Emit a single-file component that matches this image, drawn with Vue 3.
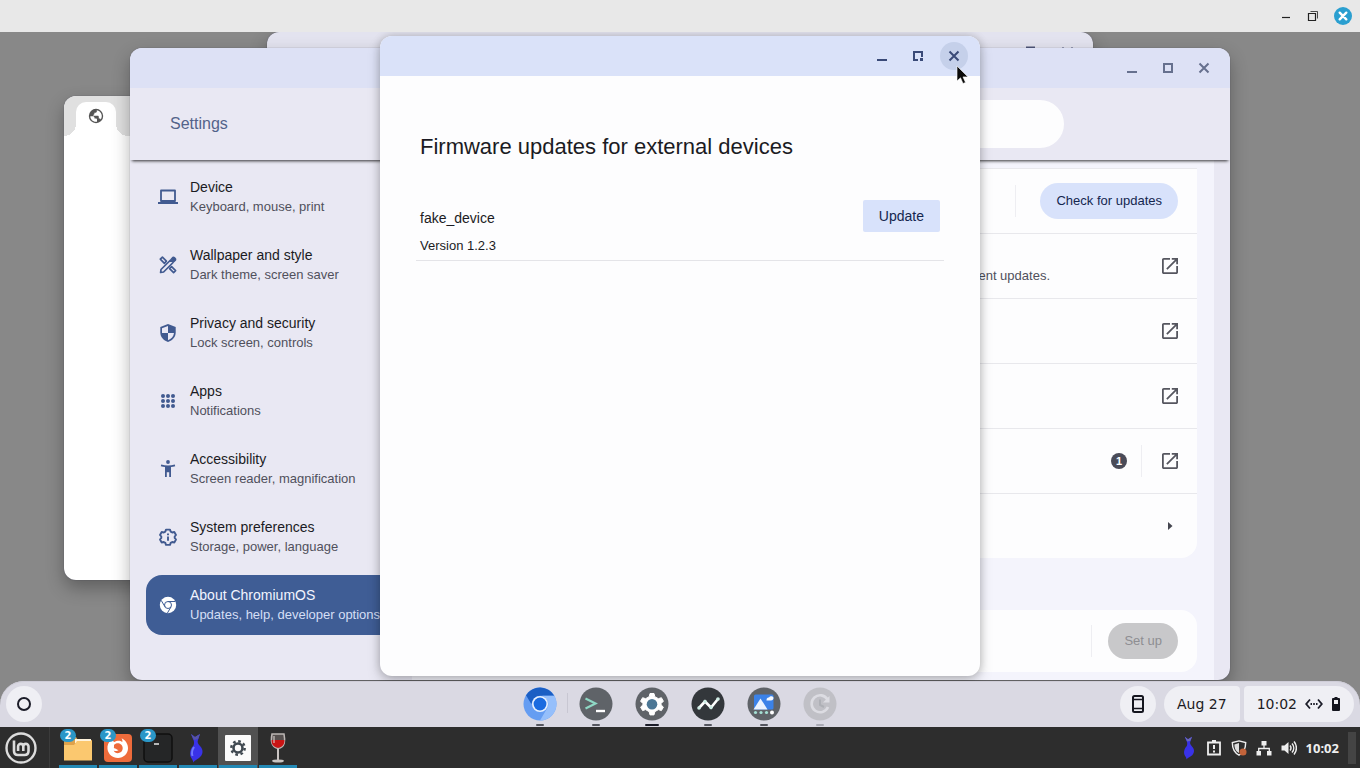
<script setup>
import { ref } from 'vue';

const activeItem = ref('About ChromiumOS');

const menu = [
  { icon: 'laptop', title: 'Device', sub: 'Keyboard, mouse, print' },
  { icon: 'style', title: 'Wallpaper and style', sub: 'Dark theme, screen saver' },
  { icon: 'shield', title: 'Privacy and security', sub: 'Lock screen, controls' },
  { icon: 'apps', title: 'Apps', sub: 'Notifications' },
  { icon: 'access', title: 'Accessibility', sub: 'Screen reader, magnification' },
  { icon: 'system', title: 'System preferences', sub: 'Storage, power, language' },
  { icon: 'chrome', title: 'About ChromiumOS', sub: 'Updates, help, developer options' }
];

const shelfApps = [
  { icon: 'chromium', label: 'Chromium' },
  { icon: 'terminal', label: 'Terminal' },
  { icon: 'settings', label: 'Settings', active: true },
  { icon: 'diagnostics', label: 'Diagnostics' },
  { icon: 'gallery', label: 'Gallery' },
  { icon: 'update', label: 'Firmware updates', dim: true }
];

const hostApps = [
  { icon: 'files', label: 'Files', count: 2 },
  { icon: 'firefox', label: 'Browser', count: 2 },
  { icon: 'console', label: 'Console', count: 2 },
  { icon: 'fish', label: 'Emulator' },
  { icon: 'gear', label: 'System settings', active: true },
  { icon: 'wine', label: 'Wine' }
];
</script>

<template>
  <div class="screen">
    <header class="host-title">
      <button class="host-btn" aria-label="Minimize">
        <svg width="12" height="12" viewBox="0 0 12 12"><path d="M2 7.500h8" stroke="#222" stroke-width="1.200" /></svg>
      </button>
      <button class="host-btn" aria-label="Restore">
        <svg width="12" height="12" viewBox="0 0 12 12" fill="none" stroke="#222">
          <path d="M1.500 3.500h7v7h-7z" stroke-width="1.200" />
          <path d="M3.500 1.500h7v7" stroke-width=".8" />
        </svg>
      </button>
      <button class="host-btn" aria-label="Close">
        <svg width="18" height="18" viewBox="0 0 18 18">
          <circle cx="9" cy="9" r="9" fill="#2a9fd0" />
          <path d="M5.700 5.700l6.600 6.600M12.300 5.700l-6.600 6.600" stroke="#fff" stroke-width="2.400" stroke-linecap="round" />
        </svg>
      </button>
    </header>

    <main class="desktop">
      <!-- Browser window -->
      <section class="window browser">
        <div class="tab-strip">
          <div class="tab">
            <svg width="16" height="16" viewBox="0 0 16 16">
              <circle cx="8" cy="8" r="7.200" fill="#555" />
              <path d="M2.300 8.300h2.500c1 0 1.700.6 1.700 1.500v.8h1.600c.6 0 .9.400.9.900v2.200c-3.600.6-6.600-1.900-6.700-5.400z" fill="#fff" />
              <path d="M8.800 2.300v1.300c0 .7-.5 1.100-1.200 1.100H6.400v1.100c0 .6-.4.900-1 .9v1h4.200c.8 0 1.200.5 1.200 1.200v1.600h.8c.6 0 1 .4 1.200.9 2.300-3.100.6-8.300-4-9.100z" fill="#fff" />
            </svg>
          </div>
        </div>
      </section>

      <section class="window backdrop">
        <svg class="backdrop-controls" width="60" height="16" viewBox="0 0 60 16" fill="none" stroke="#50587a" stroke-width="2">
          <path d="M7 15.500h9" />
          <path d="M43 15.500h2M52 15.500h2" stroke-width="1" opacity=".5" />
        </svg>
      </section>

      <!-- Settings window -->
      <section class="window settings">
        <div class="titlebar">
          <button class="win-btn" aria-label="Minimize settings">
            <svg width="12" height="12" viewBox="0 0 12 12"><path d="M1 10h10" stroke="#66708e" stroke-width="2" /></svg>
          </button>
          <button class="win-btn" aria-label="Maximize settings">
            <svg width="12" height="12" viewBox="0 0 12 12" fill="none"><path d="M2 2h8v8H2z" stroke="#66708e" stroke-width="2" /></svg>
          </button>
          <button class="win-btn" aria-label="Close settings">
            <svg width="12" height="12" viewBox="0 0 12 12"><path d="M1.500 1.500l9 9M10.500 1.500l-9 9" stroke="#66708e" stroke-width="2" /></svg>
          </button>
        </div>

        <div class="settings-head">
          <h2>Settings</h2>
          <input class="search" type="search" aria-label="Search settings">
        </div>

        <div class="settings-body">
          <nav class="menu">
            <a v-for="item in menu" :key="item.title" href="#" class="menu-item"
              :class="{ selected: item.title === activeItem }" @click.prevent="activeItem = item.title">
              <svg class="menu-icon" width="20" height="20" viewBox="0 0 20 20">
                <g v-if="item.icon === 'laptop'" fill="none" stroke="currentColor">
                  <path d="M3 3.500h14v10.500H3z" stroke-width="1.800" stroke-linejoin="round" />
                  <path d="M0 16h20" stroke-width="2" />
                </g>
                <g v-else-if="item.icon === 'style'" fill="none" stroke="currentColor" stroke-width="1.700" stroke-linejoin="round">
                  <path d="M2.300 4.200l2.100-2 4 4-2 2.100z" />
                  <path d="M11.600 13.600l2-2 4 4-2 2z" />
                  <path d="M2.600 17.500l.4-3L12.600 5l2.500 2.500-9.500 9.500z" />
                  <path d="M13.500 4l1.600-1.600c.6-.6 3 1.800 2.400 2.400L15.900 6.500z" fill="currentColor" />
                </g>
                <g v-else-if="item.icon === 'shield'">
                  <path d="M10 1l7.700 2.900v5.600c0 4.400-3.100 8.100-7.700 9.500-4.600-1.400-7.700-5.100-7.700-9.500V3.900z" fill="currentColor" />
                  <path d="M10 3v7H4V5.200zM10 10h6c-.4 3.400-2.700 6-6 7.200z" fill="#e9e8f5" />
                </g>
                <g v-else-if="item.icon === 'apps'" fill="currentColor">
                  <template v-for="y in 3" :key="y">
                    <circle v-for="x in 3" :key="x" :cx="x * 5" :cy="y * 5" r="2" />
                  </template>
                </g>
                <g v-else-if="item.icon === 'access'" fill="currentColor">
                  <circle cx="10" cy="3" r="1.900" />
                  <path d="M3.200 5.500c4.500 1.200 9.100 1.200 13.600 0l.4 1.800c-1.500.4-2.800.7-4.200.8v10H11.200v-4.800H8.800v4.800H7v-10c-1.400-.1-2.700-.4-4.200-.8z" />
                </g>
                <g v-else-if="item.icon === 'system'" fill="none" stroke="currentColor" stroke-width="1.900">
                  <path d="M8 2.600h4l.7 2 1.500.9 2.100-.5 1.700 3-1.300 1.500v1.400L18 12.500l-1.700 3-2.100-.5-1.500.9-.7 2H8l-.7-2-1.500-.9-2.100.5-1.700-3 1.300-1.600V9.500L2 8l1.700-3 2.100.5 1.500-.9z" stroke-linejoin="round" />
                  <path d="M10 6.500v1.700M10 9.500v4.200" />
                </g>
                <g v-else fill="none">
                  <circle cx="10" cy="10" r="8.200" fill="#fff" />
                  <g stroke="#3f5d95" stroke-width="1">
                    <circle cx="10" cy="10" r="3.500" />
                    <path d="M10 6.500h7.400M7 11.800L3.200 5.400M13 11.800l-3.600 6.300" />
                  </g>
                </g>
              </svg>
              <span class="menu-text">
                <span class="menu-title">{{ item.title }}</span>
                <span class="menu-sub">{{ item.sub }}</span>
              </span>
            </a>
          </nav>

          <div class="content">
            <div class="card">
              <div class="row">
                <i class="divider check-divider"></i>
                <button class="pill">Check for updates</button>
              </div>
              <div v-for="n in 4" :key="n" class="row">
                <span v-if="n === 1" class="row-note">ent updates.</span>
                <template v-if="n === 4">
                  <span class="count">1</span>
                  <i class="divider"></i>
                </template>
                <a href="#" class="open-link" aria-label="Open in new window" @click.prevent>
                  <svg width="16" height="16" viewBox="3 3 18 18" fill="#55565f">
                    <path d="M19 19H5V5h7V3H5c-1.110 0-2 .9-2 2v14c0 1.100.89 2 2 2h14c1.100 0 2-.9 2-2v-7h-2v7zM14 3v2h3.590l-9.830 9.830 1.410 1.410L19 6.410V10h2V3h-7z" />
                  </svg>
                </a>
              </div>
              <div class="row">
                <a href="#" class="open-link" aria-label="More" @click.prevent>
                  <svg width="16" height="16" viewBox="0 0 16 16"><path d="M6 4l4.500 4L6 12z" fill="#44454f" /></svg>
                </a>
              </div>
            </div>
            <div class="card last-card">
              <div class="row">
                <i class="divider"></i>
                <button class="pill" disabled>Set up</button>
              </div>
            </div>
          </div>
          <div class="gutter"></div>
        </div>
      </section>

      <!-- Firmware updates window -->
      <section class="window firmware">
        <div class="titlebar">
          <button class="win-btn" aria-label="Minimize">
            <svg width="12" height="12" viewBox="0 0 12 12"><path d="M1 10h10" stroke="#3a4a78" stroke-width="2" /></svg>
          </button>
          <button class="win-btn" aria-label="Maximize">
            <svg width="12" height="12" viewBox="0 0 12 12" fill="none"><path d="M6 10H2V2h8v5" stroke="#3a4a78" stroke-width="2" /><path d="M8 8h3v3H8z" fill="#3a4a78" /></svg>
          </button>
          <button class="win-btn hovered" aria-label="Close">
            <svg width="12" height="12" viewBox="0 0 12 12"><path d="M1.500 1.500l9 9M10.500 1.500l-9 9" stroke="#3a4a78" stroke-width="2" /></svg>
          </button>
        </div>
        <div class="firmware-body">
          <h1>Firmware updates for external devices</h1>
          <div class="device">
            <div class="device-info">
              <span class="device-name">fake_device</span>
              <span class="device-version">Version 1.2.3</span>
            </div>
            <button class="update-btn">Update</button>
          </div>
        </div>
      </section>

      <svg class="cursor" width="14" height="20" viewBox="0 0 14 20">
        <path d="M1 1v15l3.500-3.200 2.500 5.700 2.500-1.100L7 11.900h5z" fill="#0a0a0a" stroke="#fff" stroke-width=".6" />
      </svg>

      <!-- Shelf -->
      <footer class="shelf">
        <div class="shelf-start">
          <button class="round" aria-label="Launcher">
            <svg width="16" height="16" viewBox="0 0 16 16"><circle cx="8" cy="8" r="6" fill="none" stroke="#1b1c28" stroke-width="2" /></svg>
          </button>
        </div>
        <div class="shelf-apps">
          <button v-for="app in shelfApps" :key="app.icon" class="shelf-app" :class="{ active: app.active, dim: app.dim }"
            :aria-label="app.label">
            <svg width="34" height="34" viewBox="0 0 34 34">
              <g v-if="app.icon === 'chromium'">
                <circle cx="17" cy="17" r="16.500" fill="#659df2" />
                <path d="M3 8.200A16.500 16.500 0 0 1 31.300 8.800H17a8.200 8.200 0 0 0-7.500 5.500L8.300 17z" fill="#1b5fc4" />
                <path d="M31.300 8.800A16.500 16.500 0 0 1 17 33.500l7.300-12.400c2.500-4.300 0-10-5-12.300z" fill="#95bffb" />
                <circle cx="17" cy="17" r="8" fill="#e8f1fe" />
                <circle cx="17" cy="17" r="6.400" fill="#1a6be0" />
              </g>
              <g v-else-if="app.icon === 'terminal'">
                <circle cx="17" cy="17" r="16.500" fill="#5f6368" />
                <path d="M6.500 11.500l10 5-10 5" fill="none" stroke="#8ed8c4" stroke-width="2.200" />
                <path d="M17 24h9" stroke="#fff" stroke-width="2.400" />
              </g>
              <g v-else-if="app.icon === 'settings'">
                <circle cx="17" cy="17" r="16.500" fill="#5f6368" />
                <path d="M15 6.500h4l.8 3.200 3.600 2 3-1 2 3.500-2.300 2.300v1.400l2.300 2.200-2 3.500-3-1-3.600 2.100-.8 3.200h-4l-.8-3.200-3.600-2.100-3 1-2-3.500 2.300-2.200v-1.400l-2.300-2.300 2-3.500 3 1 3.600-2z" fill="#fff" stroke="#fff" stroke-linejoin="round" />
                <circle cx="17" cy="17.200" r="5.300" fill="#4c7795" />
              </g>
              <g v-else-if="app.icon === 'diagnostics'">
                <circle cx="17" cy="17" r="16.500" fill="#33373b" />
                <path d="M8 21l6-6.500 6 6L27 12" fill="none" stroke="#fff" stroke-width="2.600" />
                <g fill="#cfeee6"><circle cx="8" cy="21" r="1.800" /><circle cx="14" cy="14.500" r="1.800" /><circle cx="20" cy="20.500" r="1.800" /><circle cx="27" cy="12" r="1.800" /></g>
              </g>
              <g v-else-if="app.icon === 'gallery'">
                <circle cx="17" cy="17" r="16.500" fill="#5f6368" />
                <rect x="7" y="7.500" width="19.500" height="15" rx="1.500" fill="#3b82e8" />
                <path d="M6.500 22.500l7-11 7 11z" fill="#eaf3ff" />
                <path d="M19.500 13c0-2 1.500-2.500 2.500-2.500 1-2 4.500-1.500 4.500.5 0 1.500-1 2.500-2.500 2.500h-4.500z" fill="#f3f8ff" />
                <g fill="#a5e0d4"><circle cx="8.500" cy="25.500" r="1.600" /><circle cx="14" cy="25.500" r="1.600" /><circle cx="19.500" cy="25.500" r="1.600" /></g>
                <circle cx="25" cy="25.500" r="2" fill="#fff" />
              </g>
              <g v-else fill="none">
                <circle cx="17" cy="17" r="16.500" fill="#c0c0c6" />
                <path d="M24.500 12.500A8.500 8.500 0 1 0 25 20" stroke="#dcdce2" stroke-width="2.600" />
                <path d="M26.500 9v6.500H20z" fill="#dcdce2" />
                <path d="M17 12.500V18l4 2" stroke="#aeb0b6" stroke-width="2" />
              </g>
            </svg>
          </button>
        </div>
        <div class="shelf-end">
          <button class="round" aria-label="Phone hub">
            <svg width="20" height="20" viewBox="0 0 20 20" fill="none" stroke="#15161f" stroke-width="2">
              <rect x="5" y="2" width="10" height="16" rx="1.500" />
              <path d="M5 5.500h10M5 14.500h10" stroke-width="1.500" />
            </svg>
          </button>
          <button class="tray date">Aug 27</button>
          <button class="tray status">
            <span>10:02</span>
            <svg width="18" height="14" viewBox="0 0 18 14" fill="none" stroke="#1b1c28" stroke-width="1.800">
              <path d="M5 2.500L1.200 7 5 11.500M13 2.500L16.800 7 13 11.500" />
              <path d="M5.500 7h1.500M8.200 7h1.600M11 7h1.500" />
            </svg>
            <svg width="10" height="14" viewBox="0 0 10 14">
              <path d="M3.500 0h3v1H8q1 0 1 1v11q0 1-1 1H2q-1 0-1-1V2q0-1 1-1h1.500z" fill="#15161f" />
              <path d="M3 3h4v4H3z" fill="#f0f0f4" />
            </svg>
          </button>
        </div>
      </footer>
    </main>

    <footer class="taskbar">
      <button class="mint" aria-label="Menu">
        <svg width="32" height="32" viewBox="0 0 32 32" fill="none" stroke="#dcdcdc">
          <circle cx="16" cy="16" r="14.500" stroke-width="2.400" />
          <path d="M9 8.500V19c0 2.500 1.500 4 4 4h6.500c2.500 0 4-1.500 4-4v-4.500a2.600 2.600 0 0 0-5.200 0V19M18.300 14.500a2.600 2.600 0 0 0-5.200 0V19" stroke-width="2.600" />
        </svg>
      </button>
      <i class="task-sep"></i>
      <div class="tasks">
        <button v-for="app in hostApps" :key="app.icon" class="task" :class="{ active: app.active }" :aria-label="app.label">
          <svg width="30" height="30" viewBox="0 0 30 30">
            <g v-if="app.icon === 'files'">
              <path d="M1 4h12l2 3h14v20H1z" fill="#dfa24b" />
              <path d="M12 6h16v4H12z" fill="#fff3dc" />
              <path d="M1 12h10l3-4h15v19.500H1z" fill="#fbc86f" />
            </g>
            <g v-else-if="app.icon === 'firefox'">
              <rect x="1" y="1" width="28" height="28" rx="4" fill="#ee6b3b" />
              <path d="M9 6c-3.500 3-5 6-4.500 10 .7 5.200 5 9 10.500 9s10-4.200 10-9.700c0-4.500-2.500-8-6.500-10 1 1.500 1 2.500.8 3.700C17 7 13.500 7.500 11.500 9 10 8.300 9.300 7.200 9 6z" fill="#fff" />
              <path d="M11 12c1.500-2 5-2.500 7-.5 2.300 2 2.300 5.600 0 7.500-2.500 2-6.300 1.300-7.300-1.500 1.500 1 3.800.7 4.800-.5-1.800 0-2-1.200-3.500-1.500-.8-.2-1.500-.8-1-1.500z" fill="#ee6b3b" />
            </g>
            <g v-else-if="app.icon === 'console'">
              <rect x="1" y="1" width="28" height="28" rx="4" fill="#252627" stroke="#0f0f0f" stroke-width="1.500" />
              <path d="M11 11h5" stroke="#e8e8e8" stroke-width="1.500" />
            </g>
            <g v-else-if="app.icon === 'fish'">
              <path d="M8 1l4 3 5-3-2 6c-1 2 0 4 2 6 4 4 3 9-1 12-2 1.500-4 2-6 4.500.5-2-1-3-2-5-2-4-.5-9 2.500-12 1-2.500.5-5-.5-6.500z" fill="#3932e8" />
              <path d="M8 1l4 3 5-3-2 5-4 1z" fill="#5654a8" />
              <path d="M11 14c-2 3-2.500 6-1.500 9" fill="none" stroke="#6f78ff" stroke-width="2" />
            </g>
            <g v-else-if="app.icon === 'gear'">
              <rect x="2" y="2" width="26" height="26" rx="1" fill="#fbfbfb" />
              <circle cx="15" cy="15" r="4.500" fill="none" stroke="#3f4850" stroke-width="2.600" />
              <circle cx="15" cy="15" r="6.700" fill="none" stroke="#3f4850" stroke-width="2.400" stroke-dasharray="2.630 2.630" />
            </g>
            <g v-else>
              <path d="M9 1h12c1.200 6 1.500 13-6 14.500C7.500 14 7.800 7 9 1z" fill="#56504f" stroke="#bcb6b4" stroke-width="1.500" />
              <path d="M8.600 7h12.800c.2 4-1.400 7-6.400 7.800C10 14 8.400 11 8.600 7z" fill="#c91414" />
              <path d="M15 15.500V27" stroke="#c9c4c2" stroke-width="2" />
              <ellipse cx="15" cy="28" rx="6" ry="1.600" fill="#c9c4c2" />
              <path d="M11 3v7" stroke="#e5dedc" />
            </g>
          </svg>
          <span v-if="app.count" class="task-count">{{ app.count }}</span>
        </button>
      </div>
      <div class="host-tray">
        <svg width="18" height="24" viewBox="4 0 20 30">
          <path d="M10 1l4 3 5-3-2 6c-1 2 0 4 2 6 4 4 3 9-1 12-2 1.500-4 2-6 4.500.5-2-1-3-2-5-2-4-.5-9 2.500-12 1-2.500.5-5-.5-6.500z" fill="#3932e8" />
          <path d="M10 1l4 3 5-3-2 5-4 1z" fill="#6a68b8" />
        </svg>
        <svg width="16" height="16" viewBox="0 0 16 16" fill="none" stroke="#eee" stroke-width="1.800">
          <path d="M2 2.500h12v12H2z" />
          <path d="M8 5v4M8 10.500v2" stroke-width="2" />
          <path d="M6 1.200h4" stroke-width="2.400" />
        </svg>
        <svg width="16" height="16" viewBox="0 0 18 18">
          <path d="M9 1l7.500 2c0 6.500-2 11-7.500 14-5.500-3-7.500-7.500-7.500-14z" fill="#2d2d2d" stroke="#eee" stroke-width="1.600" />
          <path d="M9 3.500v11C5 12.500 4 9.500 3.800 5z" fill="#ddd" />
          <circle cx="13.500" cy="13.500" r="4" fill="#c2633a" />
        </svg>
        <svg width="16" height="16" viewBox="0 0 16 16" fill="#eee">
          <path d="M5.500 1h5v4.500h-5zM.5 11h4.500v4.500H.5zM11 11h4.500v4.500H11z" />
          <path d="M8 5v3.500M2.700 11.500v-3h10.600v3" fill="none" stroke="#eee" stroke-width="1.300" />
        </svg>
        <svg width="16" height="16" viewBox="0 0 16 16" fill="none" stroke="#eee" stroke-width="1.500">
          <path d="M.5 5.500h3L7.500 2v12l-4-3.500h-3z" fill="#eee" stroke="none" />
          <path d="M9 5.500c1.200 1.500 1.200 3.500 0 5M11 3.500c2.300 2.600 2.300 6.400 0 9M13 1.500c3.200 3.700 3.200 9.300 0 13" />
        </svg>
        <span class="host-clock">10:02</span>
        <i class="show-desktop"></i>
      </div>
    </footer>
  </div>
</template>

<style>
body {
  margin: 0;
  background: #2d2d2d;
}
</style>

<style scoped>
.screen {
  display: flex;
  flex-direction: column;
  min-height: 100vh;
  font-family: 'Liberation Sans', Arial, sans-serif;
  color: #1b1b23;
}

.screen *,
.screen {
  box-sizing: border-box;
}

button {
  border: 0;
  padding: 0;
  background: none;
  font-family: inherit;
  color: inherit;
}

svg {
  display: block;
  flex: none;
}

.host-title {
  display: flex;
  align-items: center;
  justify-content: flex-end;
  gap: 15px;
  height: 32px;
  padding-right: 8px;
  background: #e8e8e8;
}

.desktop {
  position: relative;
  flex: 1;
  display: flex;
  flex-direction: column;
  justify-content: flex-end;
  background: #888;
  overflow: hidden;
}

/* Windows */
.window {
  position: absolute;
  isolation: isolate;
  border-radius: 12px;
  overflow: hidden;
  box-shadow: 0 0 1px rgba(30, 30, 60, 0.6), 0 8px 18px rgba(0, 0, 0, 0.3);
}

.browser {
  left: 64px;
  top: 64px;
  width: 600px;
  height: 484px;
  background: #fff;
}

.tab-strip {
  display: flex;
  align-items: flex-end;
  height: 40px;
  padding-left: 12px;
  background: #e0e0e0;
}

.tab {
  position: relative;
  display: flex;
  justify-content: center;
  width: 40px;
  height: 34px;
  padding-top: 6px;
  border-radius: 10px 10px 0 0;
  background: #fff;
}

.tab::before,
.tab::after {
  content: '';
  position: absolute;
  bottom: 0;
  width: 12px;
  height: 12px;
}

.tab::before {
  right: 100%;
  background: radial-gradient(circle at 0 0, transparent 12px, #fff 12px);
}

.tab::after {
  left: 100%;
  background: radial-gradient(circle at 100% 0, transparent 12px, #fff 12px);
}

.backdrop {
  left: 267px;
  top: 0;
  width: 826px;
  height: 600px;
  background: #e3e3ef;
}

.backdrop-controls {
  margin-left: 752px;
}

.settings {
  left: 130px;
  top: 16px;
  display: flex;
  flex-direction: column;
  width: 1100px;
  height: 632px;
  background: #e9e8f3;
}

.titlebar {
  display: flex;
  align-items: center;
  justify-content: flex-end;
  gap: 8px;
  flex: none;
  height: 40px;
  padding-right: 12px;
  background: #dde1f5;
}

.win-btn {
  display: flex;
  align-items: center;
  justify-content: center;
  width: 28px;
  height: 28px;
  border-radius: 50%;
}

.win-btn.hovered {
  background: #c5d0ea;
}

.settings-head {
  position: relative;
  display: flex;
  align-items: center;
  flex: none;
  height: 72px;
  padding: 0 40px;
  background: #e9e8f3;
  box-shadow: 0 3px 3px -2px rgba(0, 0, 0, 0.8);
  z-index: 1;
}

.settings-head h2 {
  flex: none;
  width: 214px;
  margin: 0;
  font-size: 16px;
  font-weight: 400;
  line-height: 24px;
  color: #53638a;
}

.search {
  width: 680px;
  height: 48px;
  border: 0;
  border-radius: 24px;
  background: #fdfdfe;
}

.settings-body {
  display: flex;
  flex: 1;
  min-height: 0;
}

.menu {
  display: flex;
  flex-direction: column;
  flex: none;
  gap: 8px;
  width: 282px;
  padding: 7px 0 0 16px;
}

.menu-item {
  display: flex;
  align-items: center;
  flex: none;
  gap: 12px;
  height: 60px;
  padding-left: 12px;
  border-radius: 16px;
  color: #415a90;
  text-decoration: none;
  white-space: nowrap;
}

.menu-text {
  display: flex;
  flex-direction: column;
}

.menu-title {
  font-size: 14px;
  line-height: 20px;
  color: #1b1b23;
}

.menu-sub {
  font-size: 13px;
  line-height: 20px;
  color: #50505c;
}

.selected {
  background: #3f5d95;
}

.selected .menu-title {
  color: #f2f5ff;
}

.selected .menu-sub {
  color: #d5dff5;
}

.content {
  flex: 1;
  min-width: 0;
  padding: 8px 17px 0 40px;
  background: #f4f4fc;
}

.gutter {
  width: 16px;
}

.card {
  background: #fdfdfe;
  border-radius: 0 0 16px 16px;
}

.last-card {
  margin-top: 52px;
  border-radius: 16px;
}

.row {
  display: flex;
  align-items: center;
  justify-content: flex-end;
  height: 65px;
  padding-right: 19px;
  border-top: 1px solid #e8e8ec;
}

.last-card .row {
  height: 62px;
  border-top: 0;
}

.row-note {
  margin: 20px 112px 0 0;
  font-size: 13px;
  line-height: 20px;
  color: #50505c;
}

.count {
  width: 16px;
  height: 16px;
  border-radius: 50%;
  background: #4a4b58;
  color: #fff;
  font-size: 11px;
  font-weight: 700;
  line-height: 16px;
  text-align: center;
}

.divider {
  width: 1px;
  height: 32px;
  margin: 0 16px;
  background: #eeeef2;
}

.count + .divider {
  margin: 0 20px 0 14px;
}

.check-divider {
  margin-right: 24px;
}

.pill {
  height: 36px;
  padding: 0 16px 2px;
  border-radius: 18px;
  background: #d8e2fb;
  font-size: 13px;
  color: #14264f;
}

.pill:disabled {
  background: #c8c8ca;
  color: #8e8e92;
}

.firmware {
  left: 380px;
  top: 4px;
  width: 600px;
  height: 640px;
  background: #fdfdfe;
  box-shadow: 0 0 8px rgba(0, 0, 0, 0.2), 0 6px 14px rgba(0, 0, 0, 0.18);
}

.firmware .titlebar {
  background: #dae2f9;
}

.firmware-body {
  padding: 56px 36px 0;
}

.firmware-body h1 {
  margin: 0 4px 34px;
  font-size: 22px;
  font-weight: 400;
  line-height: 30px;
}

.device {
  display: flex;
  align-items: flex-start;
  justify-content: space-between;
  padding: 4px;
  border-bottom: 1px solid #e4e4e8;
}

.device-info {
  display: flex;
  flex-direction: column;
  gap: 8px;
  padding-top: 8px;
}

.device-name {
  font-size: 14px;
  line-height: 20px;
}

.device-version {
  font-size: 13px;
  line-height: 20px;
}

.update-btn {
  height: 32px;
  padding: 0 16px;
  border-radius: 2px;
  background: #d8e2fb;
  font-size: 14px;
  color: #14264f;
}

.cursor {
  position: absolute;
  left: 956px;
  top: 33px;
}

/* Shelf */
.shelf {
  position: relative;
  display: grid;
  grid-template-columns: 1fr auto 1fr;
  align-items: center;
  height: 46px;
  padding: 0 6px;
  border-radius: 24px 24px 0 0;
  background: #dad9e3;
  box-shadow: inset 0 1px 0 #cfcdd8;
}

.round {
  display: flex;
  align-items: center;
  justify-content: center;
  width: 36px;
  height: 36px;
  border-radius: 50%;
  background: #efeff4;
}

.shelf-apps {
  display: flex;
}

.shelf-app {
  position: relative;
  display: flex;
  align-items: center;
  justify-content: center;
  width: 56px;
  height: 46px;
}

.shelf-app:first-child::before {
  content: '';
  position: absolute;
  right: 0;
  top: 12px;
  width: 1px;
  height: 20px;
  background: #c8c7d2;
}

.shelf-app::after {
  content: '';
  position: absolute;
  bottom: 1px;
  width: 8px;
  height: 2px;
  border-radius: 1px;
  background: #55565f;
}

.shelf-app.active::after {
  width: 14px;
  background: #1b1c28;
}

.shelf-app.dim::after {
  background: #aaaab4;
}

.shelf-end {
  display: flex;
  align-items: center;
  justify-content: flex-end;
  gap: 4px;
}

.shelf-end .round {
  margin-right: 4px;
}

.tray {
  display: flex;
  align-items: center;
  height: 36px;
  background: #efeff4;
  font-family: 'DejaVu Sans', sans-serif;
  font-size: 14px;
}

.date {
  padding: 0 13px;
  border-radius: 18px 4px 4px 18px;
}

.status {
  gap: 8px;
  padding: 0 13px;
  border-radius: 4px 18px 18px 4px;
}

/* Host taskbar */
.taskbar {
  display: flex;
  align-items: center;
  height: 41px;
  padding-left: 5px;
  background: #2d2d2d;
}

.task-sep {
  width: 1px;
  height: 41px;
  margin: 0 8px 0 12px;
  background: #3b3b3b;
}

.tasks {
  display: flex;
}

.task {
  position: relative;
  display: flex;
  align-items: center;
  justify-content: center;
  width: 40px;
  height: 41px;
}

.task::after {
  content: '';
  position: absolute;
  left: 1px;
  right: 1px;
  bottom: 0;
  height: 3px;
  background: #2389b5;
}

.task.active {
  background: #515151;
}

.task-count {
  position: absolute;
  left: 2px;
  top: 2px;
  width: 16px;
  height: 13px;
  border-radius: 7px;
  background: #2b97c8;
  color: #fff;
  font-family: 'DejaVu Sans', sans-serif;
  font-size: 10px;
  font-weight: 700;
  line-height: 13px;
  text-align: center;
}

.host-tray {
  display: flex;
  align-items: center;
  gap: 9px;
  margin-left: auto;
  padding-right: 4px;
  color: #eee;
}

.host-clock {
  font-family: 'Noto Sans', sans-serif;
  font-size: 13px;
  font-weight: 700;
}

.show-desktop {
  width: 8px;
  height: 32px;
  background: #444;
}
</style>
